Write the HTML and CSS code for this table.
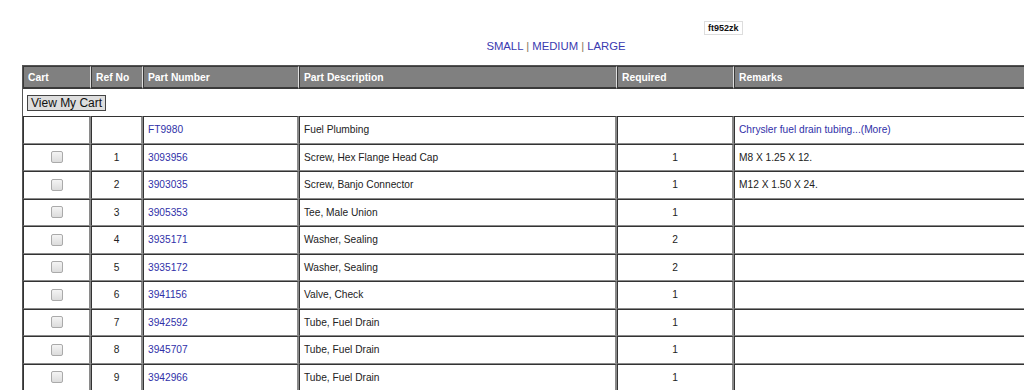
FILE: index.html
```html
<!DOCTYPE html>
<html>
<head>
<meta charset="utf-8">
<link rel="stylesheet" href="styles.css">
</head>
<body>
<div class="page">
  <div class="topbar">
    <div class="code-row"><span class="code">ft952zk</span></div>
    <div class="sizes"><a href="#">SMALL</a> <span class="sep">|</span> <a href="#">MEDIUM</a> <span class="sep">|</span> <a href="#">LARGE</a></div>
  </div>
  <table class="parts">
    <colgroup>
      <col class="c-cart"><col class="c-ref"><col class="c-pn"><col class="c-desc"><col class="c-req"><col class="c-rem">
    </colgroup>
    <thead>
      <tr><th>Cart</th><th>Ref No</th><th>Part Number</th><th>Part Description</th><th>Required</th><th>Remarks</th></tr>
    </thead>
    <tbody>
      <tr class="cartrow"><td colspan="6"><button class="btn">View My Cart</button></td></tr>
      <tr><td></td><td></td><td><a href="#">FT9980</a></td><td>Fuel Plumbing</td><td></td><td><a href="#">Chrysler fuel drain tubing...(More)</a></td></tr>
      <tr><td class="ctr"><input type="checkbox" class="cb"></td><td class="ctr">1</td><td><a href="#">3093956</a></td><td>Screw, Hex Flange Head Cap</td><td class="ctr">1</td><td>M8 X 1.25 X 12.</td></tr>
      <tr><td class="ctr"><input type="checkbox" class="cb"></td><td class="ctr">2</td><td><a href="#">3903035</a></td><td>Screw, Banjo Connector</td><td class="ctr">1</td><td>M12 X 1.50 X 24.</td></tr>
      <tr><td class="ctr"><input type="checkbox" class="cb"></td><td class="ctr">3</td><td><a href="#">3905353</a></td><td>Tee, Male Union</td><td class="ctr">1</td><td></td></tr>
      <tr><td class="ctr"><input type="checkbox" class="cb"></td><td class="ctr">4</td><td><a href="#">3935171</a></td><td>Washer, Sealing</td><td class="ctr">2</td><td></td></tr>
      <tr><td class="ctr"><input type="checkbox" class="cb"></td><td class="ctr">5</td><td><a href="#">3935172</a></td><td>Washer, Sealing</td><td class="ctr">2</td><td></td></tr>
      <tr><td class="ctr"><input type="checkbox" class="cb"></td><td class="ctr">6</td><td><a href="#">3941156</a></td><td>Valve, Check</td><td class="ctr">1</td><td></td></tr>
      <tr><td class="ctr"><input type="checkbox" class="cb"></td><td class="ctr">7</td><td><a href="#">3942592</a></td><td>Tube, Fuel Drain</td><td class="ctr">1</td><td></td></tr>
      <tr><td class="ctr"><input type="checkbox" class="cb"></td><td class="ctr">8</td><td><a href="#">3945707</a></td><td>Tube, Fuel Drain</td><td class="ctr">1</td><td></td></tr>
      <tr><td class="ctr"><input type="checkbox" class="cb"></td><td class="ctr">9</td><td><a href="#">3942966</a></td><td>Tube, Fuel Drain</td><td class="ctr">1</td><td></td></tr>
    </tbody>
  </table>
</div>
</body>
</html>
```

FILE: styles.css
```css
html, body {
  margin: 0;
  padding: 0;
  background: #fff;
  overflow: hidden;
}
body {
  font-family: "Liberation Sans", Arial, sans-serif;
  font-size: 11px;
  color: #222;
}
.page {
  width: 1024px;
  height: 390px;
  overflow: hidden;
}
.topbar {
  padding-top: 21px;
  height: 65px;
  box-sizing: border-box;
}
.code-row {
  display: flex;
  padding-left: 704px;
  height: 14px;
}
.code {
  display: inline-block;
  border: 1px solid #ddd;
  font-size: 9px;
  font-weight: bold;
  line-height: 12px;
  padding: 0 3px;
  color: #111;
}
.sizes {
  text-align: center;
  font-size: 11.3px;
  line-height: 14px;
  margin-top: 4px;
  padding-left: 88px;
  color: #3a3aa8;
}
.sizes a {
  color: #3a3ab0;
  text-decoration: none;
}
.sizes .sep { color: #8a7a5a; }

.parts {
  margin-left: 22px;
  border-collapse: separate;
  border-spacing: 0;
  table-layout: fixed;
  width: 1060px;
  border: 1px solid #555;
}
.c-cart { width: 68px; }
.c-ref { width: 52px; }
.c-pn { width: 156px; }
.c-desc { width: 318px; }
.c-req { width: 117px; }
.c-rem { width: 349px; }

.parts th {
  background: #808080;
  color: #fff;
  font-weight: bold;
  text-align: left;
  height: 23px;
  box-sizing: border-box;
  padding: 0 4px;
  border-top: 1px solid #3a3a3a;
  border-left: 1px solid #3a3a3a;
  border-right: 1px solid #e0e0e0;
  border-bottom: 2px solid #3a3a3a;
  font-size: 10.3px;
}
.parts td {
  height: 27.5px;
  box-sizing: border-box;
  padding: 0 4px;
  border-top: 1px solid #333;
  border-left: 1px solid #333;
  border-right: 2px solid #8a8a8a;
  border-bottom: 1px solid #8a8a8a;
  font-size: 10.2px;
  color: #222;
  white-space: nowrap;
  overflow: hidden;
}
.parts .cartrow td {
  border: none;
  height: 27px;
  padding: 0 4px;
}
.parts td.ctr { text-align: center; }
.parts a {
  color: #3030a8;
  text-decoration: none;
}
.btn {
  font-family: "Liberation Sans", Arial, sans-serif;
  font-size: 12px;
  height: 16px;
  line-height: 12px;
  padding: 0 3px;
  margin: 0;
  background: #dedede;
  border: 1px solid #444;
  color: #111;
  border-radius: 0;
  display: block;
}
.cb {
  appearance: none;
  -webkit-appearance: none;
  width: 12px;
  height: 12px;
  margin: 0;
  border: 1px solid #aaa;
  border-radius: 2px;
  background: linear-gradient(#f4f4f4, #dcdcdc);
  vertical-align: middle;
  display: inline-block;
}
```
